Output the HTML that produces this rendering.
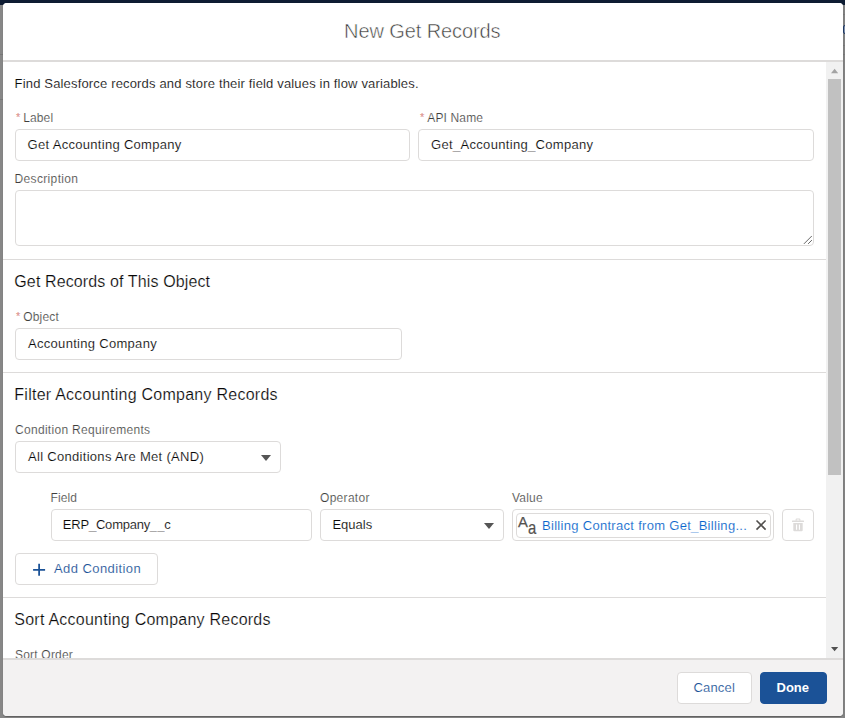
<!DOCTYPE html>
<html lang="en">
<head>
<meta charset="utf-8">
<title>New Get Records</title>
<style>
*{box-sizing:border-box;margin:0;padding:0}
html,body{width:845px;height:718px;overflow:hidden}
body{background:#878787;font-family:"Liberation Sans",sans-serif;font-size:13px;color:#080707;position:relative}
.topbar{position:absolute;left:0;top:0;width:845px;height:5px;background:#0e1c33}
.rstrip{position:absolute;left:843px;top:5px;width:2px;height:713px;background:#828282}
.ln{position:absolute;height:1px;background:#787878}
.modal{position:absolute;left:3px;top:3px;width:840px;height:713px;background:#fff;border-radius:4px;overflow:hidden;box-shadow:0 0.5px 1px rgba(0,0,0,.3)}
.abs{position:absolute;white-space:nowrap}
.hdr{position:absolute;left:0;top:0;width:840px;height:59px;background:#fff;border-bottom:2px solid #dddbda}
.title{position:absolute;left:0;top:0;width:840px;text-align:center;font-size:20px;line-height:57px;color:#3e3e3c;letter-spacing:-0.1px;padding-right:1.5px;-webkit-text-stroke:0.5px #fff}
.ftr{position:absolute;left:0;top:655px;width:840px;height:58px;background:#f3f2f2;border-top:2px solid #dddbda}
.lbl{font-size:12px;color:#3e3e3c;line-height:16px;-webkit-text-stroke:0.18px #fff}
.inp span,#intro,#addt,#cancel{-webkit-text-stroke:0.14px #fff}
#pt{-webkit-text-stroke:0.12px #fff}
.req{color:#c23934;margin-right:3px;font-size:11px;position:relative;top:-1px}
.inp{position:absolute;height:32px;border:1px solid #dddbda;border-radius:4px;background:#fff;line-height:30px;padding-left:12px;font-size:13px;white-space:nowrap;overflow:hidden}
.h3{font-size:16px;line-height:20px;color:#080707;-webkit-text-stroke:0.2px #fff}
.thin{-webkit-text-stroke:0.2px #fff}
.hr{position:absolute;left:0;width:823px;height:1px;background:#dddbda}
.btn{position:absolute;height:32px;border:1px solid #dddbda;border-radius:4px;background:#fff;color:#1b5297;font-size:13px;line-height:30px;text-align:center;white-space:nowrap}
.tri{position:absolute;width:0;height:0;border-left:5.5px solid transparent;border-right:5.5px solid transparent;border-top:6px solid #555}
</style>
</head>
<body>
<div class="topbar"></div>
<div class="rstrip"></div>
<div class="ln" style="left:0;top:54px;width:3px"></div>
<div class="ln" style="left:0;top:99px;width:3px"></div>
<div class="ln" style="left:843px;top:14px;width:2px"></div>
<div class="ln" style="left:843px;top:45px;width:2px"></div>
<div class="ln" style="left:843px;top:54px;width:2px"></div>
<div class="abs" style="left:843px;top:25px;width:4px;height:9px;border:1px solid #1f3a66;border-radius:2px;background:#7d8da8"></div>
<div class="modal">
  <!-- body content : coordinates relative to modal (page - 3) -->
  <div class="abs" id="intro" style="left:11.6px;top:73px;line-height:16px;letter-spacing:0.165px">Find Salesforce records and store their field values in flow variables.</div>

  <div class="abs lbl" id="l1" style="left:13px;top:107px"><span class="req">*</span><span style="letter-spacing:0.1px">Label</span></div>
  <div class="inp" id="i1" style="left:12px;top:126px;width:395px"><span style="letter-spacing:0.3px;margin-left:-0.4px">Get Accounting Company</span></div>

  <div class="abs lbl" id="l2" style="left:417px;top:107px"><span class="req">*</span><span style="letter-spacing:0.15px">API Name</span></div>
  <div class="inp" id="i2" style="left:415px;top:126px;width:396px"><span style="letter-spacing:0.32px">Get_Accounting_Company</span></div>

  <div class="abs lbl" id="l3" style="left:11.5px;top:168px;letter-spacing:0.35px">Description</div>
  <div class="inp" id="ta" style="left:12px;top:187px;width:799px;height:56px"></div>
  <svg class="abs" style="left:799px;top:231px" width="10" height="10" viewBox="0 0 10 10"><path d="M1.9 9.9L9.9 1.9M6.1 9.9L9.9 6.1" stroke="#555" stroke-width="0.9" fill="none"/></svg>

  <div class="hr" style="top:256px"></div>
  <div class="abs h3" id="h1" style="left:11.3px;top:269px;letter-spacing:0.12px">Get Records of This Object</div>
  <div class="abs lbl" id="l4" style="left:13px;top:306px"><span class="req">*</span><span style="letter-spacing:0.15px">Object</span></div>
  <div class="inp" id="i3" style="left:12px;top:325px;width:387px"><span style="letter-spacing:0.3px">Accounting Company</span></div>

  <div class="hr" style="top:369px"></div>
  <div class="abs h3" id="h2" style="left:11.3px;top:382px;letter-spacing:0.25px">Filter Accounting Company Records</div>
  <div class="abs lbl" id="l5" style="left:12px;top:419px;letter-spacing:0.3px">Condition Requirements</div>
  <div class="inp" id="s1" style="left:12px;top:438px;width:266px"><span style="letter-spacing:0.3px">All Conditions Are Met (AND)</span></div>
  <div class="tri" style="left:258px;top:452px"></div>

  <div class="abs lbl" id="l6" style="left:47.5px;top:487px;letter-spacing:0.1px">Field</div>
  <div class="inp" id="i4" style="left:48px;top:506px;width:261px"><span style="letter-spacing:-0.21px;margin-left:-1.2px">ERP_Company__c</span></div>

  <div class="abs lbl" id="l7" style="left:317px;top:487px;letter-spacing:0.3px">Operator</div>
  <div class="inp" id="s2" style="left:317px;top:506px;width:184px"><span style="letter-spacing:0px;margin-left:-0.6px">Equals</span></div>
  <div class="tri" style="left:481px;top:520px"></div>

  <div class="abs lbl" id="l8" style="left:509px;top:487px;letter-spacing:0.2px">Value</div>
  <div class="inp" id="vb" style="left:509px;top:506px;width:262px"></div>
  <div class="inp" id="pill" style="left:513px;top:510px;width:255px;height:25px;padding:0"></div>
  <svg class="abs" id="aa" style="left:514px;top:512px" width="22" height="20" viewBox="0 0 22 20">
    <text x="0.9" y="12.1" font-family="Liberation Sans, sans-serif" font-size="14.8" fill="#54524f" stroke="#54524f" stroke-width="0.25">A</text>
    <text transform="translate(11,18.8) scale(0.8,1)" x="0" y="0" font-family="Liberation Sans, sans-serif" font-size="18.6" fill="#54524f" stroke="#54524f" stroke-width="0.2">a</text>
  </svg>
  <div class="abs" id="pt" style="left:539px;top:515px;line-height:16px;color:#0a66cc;letter-spacing:0.3px">Billing Contract from Get_Billing...</div>
  <svg class="abs" id="xx" style="left:752px;top:516px" width="12" height="12" viewBox="0 0 12 12"><path d="M1.5 1.5L10.6 10.6M10.6 1.5L1.5 10.6" stroke="#514f4d" stroke-width="1.6" fill="none"/></svg>

  <div class="btn" id="trash" style="left:779px;top:506px;width:32px"></div>
  <svg class="abs" style="left:788px;top:515px" width="14" height="14" viewBox="0 0 14 14" fill="#dddbda">
    <rect x="1" y="2.6" width="12" height="1.5" rx="0.4"/>
    <path d="M4.6 2.8V1.5Q4.6 0.5 5.6 0.5H8.4Q9.4 0.5 9.4 1.5V2.8H8.3V1.6H5.7V2.8Z"/>
    <path d="M2.3 5.1H11.7V12.2Q11.7 13.3 10.6 13.3H3.4Q2.3 13.3 2.3 12.2ZM5 6.6V11.7H6.1V6.6ZM7.9 6.6V11.7H9V6.6Z" fill-rule="evenodd"/>
  </svg>

  <div class="btn" id="add" style="left:12px;top:550px;width:143px"></div>
  <svg class="abs" style="left:29px;top:560px" width="14" height="14" viewBox="0 0 14 14"><path d="M7.1 0.8V12.8M1.1 6.8H13.1" stroke="#1b5297" stroke-width="1.75" fill="none"/></svg>
  <div class="abs" id="addt" style="left:51px;top:558px;line-height:16px;color:#1b5297;letter-spacing:0.42px">Add Condition</div>

  <div class="hr" style="top:594px"></div>
  <div class="abs h3" id="h3" style="left:11.3px;top:607px;letter-spacing:0.24px">Sort Accounting Company Records</div>
  <div class="abs lbl" id="l9" style="left:12px;top:644px;letter-spacing:0.2px">Sort Order</div>

  <!-- scrollbar -->
  <div class="abs" style="left:823px;top:59px;width:17px;height:596px;background:#f1f1f1"></div>
  <div class="abs" style="left:825px;top:76px;width:13px;height:396px;background:#c1c1c1"></div>
  <svg class="abs" style="left:823px;top:59px" width="17" height="596" viewBox="0 0 17 596">
    <polygon points="5,11.2 12.2,11.2 8.6,6.8" fill="#a3a3a3"/>
    <polygon points="5,585 12.2,585 8.6,589.2" fill="#505050"/>
  </svg>

  <div class="hdr"><div class="title" id="title">New Get Records</div></div>
  <div class="ftr">
    <div class="btn" id="cancel" style="left:674px;top:12px;width:75px;letter-spacing:0.15px;text-indent:-0.5px">Cancel</div>
    <div class="btn" id="done" style="left:757px;top:12px;width:67px;background:#1b5297;border-color:#1b5297;color:#fff;font-weight:bold;text-indent:-1.5px">Done</div>
  </div>
</div>
</body>
</html>
